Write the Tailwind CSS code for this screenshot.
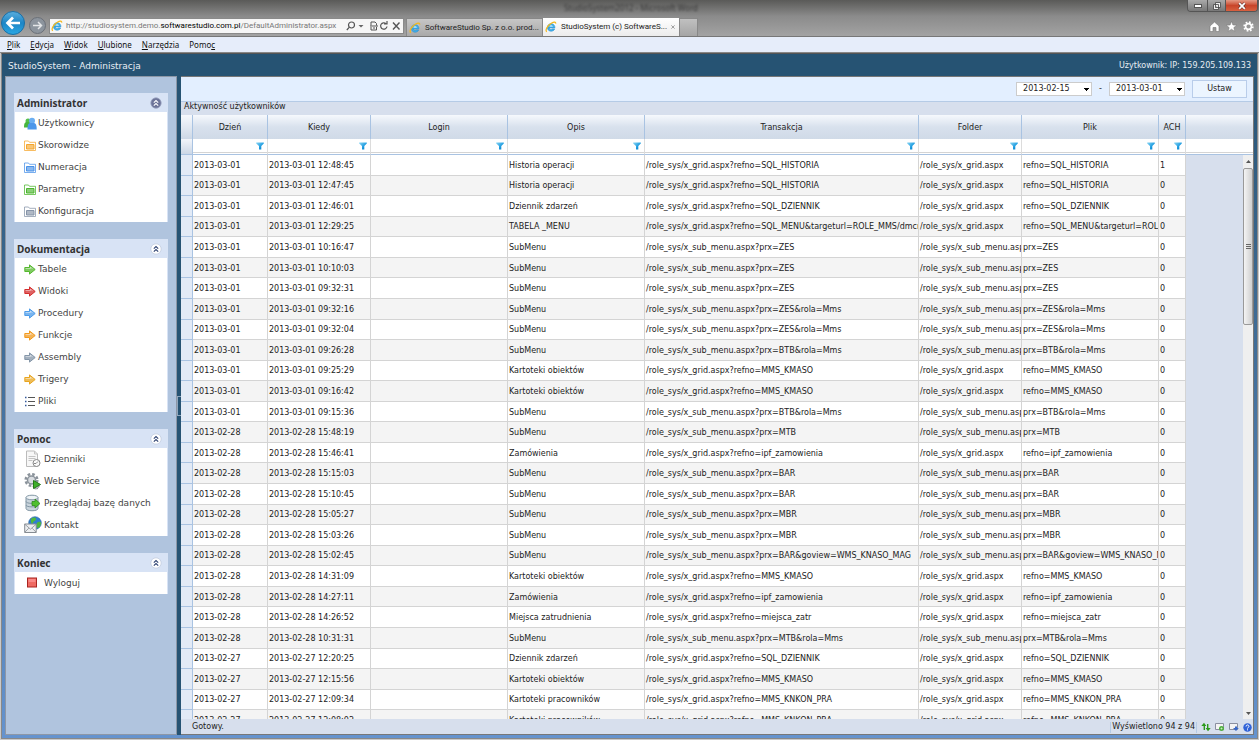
<!DOCTYPE html>
<html lang="pl">
<head>
<meta charset="utf-8">
<title>StudioSystem - Administracja</title>
<script src="https://cdn.jsdelivr.net/npm/@tailwindcss/browser@4"></script>
</head>
<body class="h-screen flex flex-col overflow-hidden bg-[#c9c9c9] font-['DejaVu_Sans',sans-serif] text-[8px] leading-[10px] text-[#222]">
<svg class="absolute size-0" aria-hidden="true">
  <defs>
    <linearGradient id="fun" x1="0" y1="0" x2="1" y2="1"><stop offset="0" stop-color="#8fd8f5"/><stop offset=".6" stop-color="#1b9be0"/><stop offset="1" stop-color="#0b78c0"/></linearGradient>
    <symbol id="ie" viewBox="0 0 16 16"><path d="M3.4 9.2h9.8c.1-3.4-1.900-5.600-5-5.600-2.900 0-5 2.100-5 5s2.100 5 5 5c2.200 0 3.900-1.100 4.700-3H9.700c-1.300 1.400-3.900.7-3.900-1.400" fill="#3fb0ea" stroke="#2b8fd0" stroke-width=".8"/><path d="M6 7.300c.3-1.900 4.100-1.900 4.500 0z" fill="#fff"/><path d="M2.500 14.300C-.6 13 3.500 5.500 9 2.600c3-1.600 5.600-1.500 5.200 1" fill="none" stroke="#f4b81c" stroke-width="1.700"/></symbol>
    <symbol id="folder" viewBox="0 0 12 11"><path d="M.5 1h4l1 1.300h6v8.200H.5z" fill="#fff" stroke="currentColor" stroke-opacity=".75"/><path d="M2.500 4.500h7.500v4.500H2.500z" fill="currentColor" fill-opacity=".65" stroke="currentColor"/></symbol>
    <symbol id="arrow" viewBox="0 0 12 11"><path d="M.8 3.500h4.700V.9l5.700 4.600-5.700 4.600V7.500H.8z" fill="currentColor" fill-opacity=".75" stroke="currentColor" stroke-linejoin="round"/><path d="M1.500 4.500h5V3l2 2" fill="none" stroke="#fff" stroke-opacity=".45"/></symbol>
    <symbol id="funnel" viewBox="0 0 8 8"><path d="M.2.400h7.600v1L5.300 4v3.500H3V4L.2 1.400z" fill="url(#fun)"/></symbol>
    <symbol id="chev" viewBox="0 0 12 12"><circle cx="6" cy="6" r="5.200" fill="#fff" stroke="#c3cde0" stroke-width=".8"/><path d="M3.800 5.600 6 3.500l2.200 2.100M3.800 8.600 6 6.500l2.200 2.100" fill="none" stroke="#2e4272" stroke-width="1.100"/></symbol>
  </defs>
</svg>

<header class="relative h-[37px] shrink-0 flex items-end border-b border-[#777] bg-linear-to-b from-[#5a5a58] via-[#8b8b8b] via-45% to-[#a3a3a3] font-['Noto_Sans',sans-serif]">
  <div class="absolute left-[564px] top-[3px] text-[8px] text-[#3d3d3d] blur-[1px]">StudioSystem2012 - Microsoft Word</div>
  <button aria-label="Wstecz" class="ml-px mb-px shrink-0"><svg class="size-6" viewBox="0 0 24 24"><defs><linearGradient id="bk" x1="0" y1="0" x2="0" y2="1"><stop offset="0" stop-color="#5aaede"/><stop offset=".5" stop-color="#1d86c6"/><stop offset="1" stop-color="#2aa8e4"/></linearGradient></defs><circle cx="12" cy="12" r="11.500" fill="url(#bk)" stroke="#1d6fa4"/><path d="M19 12H7M12 6.500 6.500 12 12 17.500" fill="none" stroke="#fff" stroke-width="2.700"/></svg></button>
  <button aria-label="Dalej" class="ml-1 mb-[2px] shrink-0"><svg class="size-[17px]" viewBox="0 0 17 17"><circle cx="8.500" cy="8.500" r="8" fill="#8c949d" stroke="#6b7078"/><path d="M4 8.500h8M9 5l3.500 3.500L9 12" fill="none" stroke="#e4e6e8" stroke-width="1.500"/></svg></button>
  <div class="ml-[3px] mb-[2px] h-4 w-[355px] shrink-0 flex items-center bg-[#f6f6f6] border border-[#8a8a8a] text-[#777]">
    <svg class="ml-px size-3"><use href="#ie"/></svg>
    <span class="ml-[3px] w-[280px] whitespace-nowrap font-['Roboto',sans-serif]">http://studiosystem.demo.<span class="text-black">softwarestudio.com.pl</span>/DefaultAdministrator.aspx</span>
    <svg class="h-[10px] w-[56px] shrink-0" viewBox="0 0 56 10" fill="none" stroke="#555" stroke-width="1.200"><circle cx="5.500" cy="4" r="3"/><path d="M3.400 6.200.8 9"/><path d="M12.500 4h5l-2.500 2.500z" fill="#666" stroke="none"/><path d="M25 4.500V1h4l1.500 1.500v2M25 6v3h5.500V6M24 5h8M27 7h2" stroke-width="1"/><path d="M40 2.600A3.200 3.200 0 1 0 41 5.500M38 3h3V0"/><path d="m47 1.500 6.500 7M53.500 1.500 47 8.500" stroke-width="1.400"/></svg>
  </div>
  <div class="ml-[2px] flex items-end text-[#222] leading-[12px] font-['Roboto',sans-serif]">
    <a href="#" class="h-[18px] w-[137px] flex items-center gap-1 pl-[2px] border border-b-0 border-[#888] bg-linear-to-b from-[#c6c6c6] to-[#a9a9a9] whitespace-nowrap"><svg class="size-3 shrink-0"><use href="#ie"/></svg>SoftwareStudio Sp. z o.o. prod...</a>
    <a href="#" class="h-[18px] w-[136px] flex items-center gap-1 pl-[2px] bg-linear-to-b from-white to-[#ececec] whitespace-nowrap"><svg class="size-3 shrink-0"><use href="#ie"/></svg><span class="flex-1">StudioSystem (c) SoftwareS...</span><svg class="mr-1 size-[6px]" viewBox="0 0 6 6"><path d="m.5.500 5 5m0-5-5 5" stroke="#888" stroke-width="1.200"/></svg></a>
    <button aria-label="Nowa karta" class="h-[18px] w-[19px] border border-b-0 border-[#888] bg-linear-to-b from-[#c0c0c0] to-[#a5a5a5]"></button>
  </div>
  <div class="ml-auto mr-[5px] flex flex-col items-end self-stretch">
    <div class="-mr-1 flex h-3 rounded-b border border-t-0 border-[#555] overflow-hidden">
      <button aria-label="Minimalizuj" class="w-[19px] flex justify-center items-center bg-linear-to-b from-[#aaa] to-[#777]"><svg class="h-[4px] w-2"><rect x=".5" y=".5" width="7" height="3" fill="#fff" stroke="#555"/></svg></button>
      <button aria-label="Przywróć" class="w-[19px] flex justify-center items-center border-x border-[#555] bg-linear-to-b from-[#aaa] to-[#777]"><svg class="size-2" viewBox="0 0 8 8"><path d="M2.500.500h5v5h-5zM.5 2.500h5v5h-5z" fill="#eee" stroke="#444" stroke-width=".8"/><path d="M2.500 4.500h1v1h-1z" fill="#444"/></svg></button>
      <button aria-label="Zamknij" class="w-[31px] flex justify-center items-center bg-linear-to-b from-[#e39a85] via-[#c8452a] to-[#d8603f]"><svg class="size-2" viewBox="0 0 8 8"><path d="m1.200 1.200 5.600 5.600m0-5.600L1.200 6.800" stroke="#533" stroke-width="2.800"/><path d="m1.200 1.200 5.600 5.600m0-5.600L1.200 6.800" stroke="#fff" stroke-width="1.700"/></svg></button>
    </div>
    <div class="mt-[9px] flex gap-[6px]">
      <button aria-label="Strona główna"><svg class="size-[11px]" viewBox="0 0 11 11"><path d="M5.500 1 1 5v5.500h3V6.500h3v4h3V5z" fill="#fff" stroke="#777" stroke-width=".6"/></svg></button>
      <button aria-label="Ulubione"><svg class="size-[11px]" viewBox="0 0 11 11"><path d="m5.500.400 1.400 3.600 3.900.2-3 2.400 1 3.800-3.300-2.200-3.300 2.200 1-3.800-3-2.400 3.900-.2z" fill="#fff" stroke="#777" stroke-width=".5"/></svg></button>
      <button aria-label="Narzędzia"><svg class="size-[11px]" viewBox="0 0 11 11"><circle cx="5.500" cy="5.500" r="4.300" fill="none" stroke="#fff" stroke-width="1.800" stroke-dasharray="1.700 1.670"/><circle cx="5.500" cy="5.500" r="2.900" fill="none" stroke="#fff" stroke-width="1.600"/></svg></button>
    </div>
  </div>
</header>

<nav class="h-[16px] shrink-0 flex items-center gap-[10px] pl-[7px] bg-[#e6edfa] border-b border-[#888] font-['Noto_Sans',sans-serif] text-[#111]">
  <a href="#"><u>P</u>lik</a><a href="#"><u>E</u>dycja</a><a href="#"><u>W</u>idok</a><a href="#"><u>U</u>lubione</a><a href="#"><u>N</u>arzędzia</a><a href="#">Pomo<u>c</u></a>
</nav>

<div class="flex-1 min-h-0 flex flex-col mx-px mb-px px-[3px] pb-[3px] bg-linear-to-b from-[#265373] to-[#6593ce] border border-t-[#555] border-[#888]">
  <div class="h-[22px] shrink-0 -mx-[3px] px-[6px] pt-[2px] flex items-center justify-between bg-[#265373] text-[#e8eef4]">
    <h1 class="text-[9px] leading-[12px]">StudioSystem - Administracja</h1>
    <span>Użytkownik: IP: 159.205.109.133</span>
  </div>
  <div class="flex-1 min-h-0 flex">
    <aside class="w-[172px] shrink-0 flex flex-col gap-[17px] px-2 pt-4 border border-[#8d97a6] bg-[#b0c4de] text-[9px] leading-[12px] text-[#444]" id="side"></aside>
    <div class="w-1 shrink-0 bg-[#265373] flex items-center"><div class="h-5 w-full border-y border-l border-[#8fa6bd]"></div></div>
    <main class="flex-1 min-w-0 flex flex-col border border-l-0 border-[#777]">
      <form class="h-6 shrink-0 flex items-center justify-end gap-[7px] pr-[6px] bg-[#e3efff]">
        <select aria-label="Data od" class="appearance-none h-[14px] w-[76px] pl-[6px] border border-[#ccc] text-[#222] bg-[linear-gradient(#000,#000),linear-gradient(#000,#000),linear-gradient(#000,#000)] bg-white bg-no-repeat bg-[size:5px_1px,3px_1px,1px_1px] bg-[position:67px_5px,68px_6px,69px_7px]"><option>2013-02-15</option></select>
        <span>-</span>
        <select aria-label="Data do" class="appearance-none h-[14px] w-[76px] pl-[6px] border border-[#ccc] text-[#222] bg-[linear-gradient(#000,#000),linear-gradient(#000,#000),linear-gradient(#000,#000)] bg-white bg-no-repeat bg-[size:5px_1px,3px_1px,1px_1px] bg-[position:67px_5px,68px_6px,69px_7px]"><option>2013-03-01</option></select>
        <button type="button" class="h-[18px] w-[55px] border border-[#b9cdea] bg-[#ecf5ff]">Ustaw</button>
      </form>
      <h2 class="h-[14px] shrink-0 flex items-start pl-[3px] border-t border-[#b5cbe6] bg-[#d7dfed]">Aktywność użytkowników</h2>
      <div class="relative flex-1 min-h-0 overflow-hidden bg-[#d7dfed]">
        <table class="table-fixed w-full h-[616px] border-separate border-spacing-0 text-left">
          <colgroup><col class="w-3"><col class="w-[75px]"><col class="w-[103px]"><col class="w-[137px]"><col class="w-[137px]"><col class="w-[274px]"><col class="w-[103px]"><col class="w-[137px]"><col class="w-[27px]"><col></colgroup>
          <thead id="head"></thead>
          <tbody id="rows"></tbody>
        </table>
        <div class="absolute right-0 top-10 bottom-0 w-[10px] flex flex-col items-center bg-[#efefef]" role="scrollbar" aria-label="Przewijanie" aria-controls="rows" aria-valuenow="0">
          <svg class="mt-[5px] h-[3px] w-[5px]" viewBox="0 0 5 3"><path d="M0 3h5L2.500 0z" fill="#555"/></svg>
          <div class="mt-[5px] h-[157px] w-[10px] rounded-xs border border-[#999] bg-linear-to-r from-[#f4f4f4] to-[#cfcfcf] flex items-center justify-center"><div class="h-[5px] w-[5px] border-y border-[#666] flex items-center"><div class="h-px w-full bg-[#666]"></div></div></div>
          <svg class="mt-auto mb-1 h-[3px] w-[5px]" viewBox="0 0 5 3"><path d="M0 0h5L2.500 3z" fill="#555"/></svg>
        </div>
      </div>
      <footer class="h-[15px] shrink-0 flex items-center bg-[#d7dfed] pl-[11px] pt-px">
        <span class="flex-1">Gotowy.</span>
        <span class="border-x border-[#b5cbe6] h-[11px] px-px">Wyświetlono 94 z 94</span>
        <span class="ml-1 mr-px flex gap-[4px]">
          <button aria-label="Odśwież"><svg class="size-[10px]" viewBox="0 0 10 10"><path d="M2.600 8V4H.3L3 .8 5.400 4H4v4zM7.400 2v4h2.300L7 9.200 4.600 6H6V2z" fill="#2c9a1c"/></svg></button>
          <button aria-label="Odśwież dane"><svg class="size-[10px]" viewBox="0 0 10 10"><path d="M.5 1.500h8v6h-8z" fill="#f4f4f4" stroke="#8a8fa0"/><circle cx="6.500" cy="6.500" r="2.500" fill="#4fae3f"/><path d="M5.500 6.500h2M6.500 5.500v2" stroke="#d8f5d0" stroke-width=".7"/></svg></button>
          <button aria-label="Eksport"><svg class="size-[10px]" viewBox="0 0 10 10"><path d="M.5 1.500h8v6h-8z" fill="#f4f4f4" stroke="#8a8fa0"/><path d="M4 6h2V4.500h2V6h1.800L7 9z" fill="#3868c8"/></svg></button>
          <button aria-label="Pomoc"><svg class="size-[9px]" viewBox="0 0 10 10"><circle cx="5" cy="5" r="4.700" fill="#2f62d8"/><path d="M3.400 3.900C3.400 1.600 6.600 1.700 6.600 3.800 6.600 5 5 5 5 6.200M5 7v1.200" fill="none" stroke="#fff" stroke-width="1.100"/></svg></button>
        </span>
      </footer>
    </main>
  </div>
</div>

<script>
const svg = (ref, color) => `<svg class="h-[11px] w-3 shrink-0" style="color:${color}"><use href="#${ref}"/></svg>`;
const users = '<svg class="size-[13px] shrink-0 -mr-px" viewBox="0 0 13 13"><circle cx="4" cy="4" r="2.500" fill="#55c04a"/><path d="M0 10.500C0 5 1.500 5 4 5s4 0 4 5.500z" fill="#46b53c"/><circle cx="8" cy="3.800" r="3" fill="#6aaef2"/><path d="M3.500 12.500C3.500 6 5 6 8 6s4.700 0 4.700 6.500z" fill="#4d97ea"/></svg>';
const list = '<svg class="h-[11px] w-3 shrink-0" viewBox="0 0 12 11"><path d="M4 1.500h7M4 5.500h7M4 9.500h7" stroke="#555"/><path d="M1 1.500h1.500M1 5.500h1.500M1 9.500h1.500" stroke="#345a9c" stroke-width="1.600"/></svg>';
const log = '<svg class="size-[18px] shrink-0" viewBox="0 0 18 18"><path d="M2.500 1h8l3 3v12.500h-11z" fill="#f7f7f7" stroke="#bbb"/><path d="M10.500 1v3h3M4.500 6.500h7M4.500 8.500h7M4.500 10.500h4" fill="none" stroke="#c4c4c4"/><circle cx="12.500" cy="13" r="3.500" fill="#fafafa" stroke="#888"/><path d="m12 13.500 2-2M12 13.500h-2" fill="none" stroke="#888"/></svg>';
const gear = '<svg class="size-[18px] shrink-0" viewBox="0 0 18 18"><circle cx="7.500" cy="8" r="5.800" fill="none" stroke="#8b939b" stroke-width="2.600" stroke-dasharray="2.600 1.950"/><circle cx="7.500" cy="8" r="4" fill="#d9dde1" stroke="#8b939b" stroke-width="1.500"/><circle cx="12" cy="14" r="3" fill="#b7bdc3" stroke="#777" stroke-dasharray="1.500 1"/><path d="M9.500 8.500v8l7-4z" fill="#3fae2a" stroke="#237a16"/></svg>';
const db = '<svg class="size-[18px] shrink-0" viewBox="0 0 18 18"><path d="M2 3.500v11c0 3 12 3 12 0v-11" fill="#c9d4dc" stroke="#8296a4"/><ellipse cx="8" cy="3.500" rx="6" ry="2.300" fill="#eef3f6" stroke="#8296a4"/><path d="M2 7.500c0 2.500 12 2.500 12 0M2 11c0 2.500 12 2.500 12 0" fill="none" stroke="#8296a4"/><path d="M8 7.500h3V5l5 4.500-5 4.500v-2.500H8z" fill="#4fc02e" stroke="#2d8a1a" stroke-width=".8"/></svg>';
const mail = '<svg class="size-[18px] shrink-0" viewBox="0 0 18 18"><circle cx="11" cy="7" r="6.300" fill="#2f7fd0" stroke="#235f9c" stroke-width=".6"/><path d="M7 3c2-2 5-2 5 0s-3 2-3 4-3 0-2-4zM13 7c2-2 4-1 4 0s-1 5-3 5-2-4-1-5z" fill="#4fb83c"/><path d="M.7 8h11.500v8.500H.7z" fill="#eceef0" stroke="#868c92"/><path d="m.8 8.200 5.700 5 5.700-5M.8 16.200l4-4m7.300 4-4-4" fill="none" stroke="#868c92" stroke-width=".8"/></svg>';
const stop = '<svg class="size-[18px] shrink-0" viewBox="0 0 18 18"><rect x="3.500" y="4" width="9" height="9" fill="#ef6a62" stroke="#a92420"/><path d="M4.500 5h7v3h-7z" fill="#f99" fill-opacity=".7"/></svg>';

const groups = [
  ['Administrator', [[users,'Użytkownicy'],[svg('folder','#f5a62c'),'Skorowidze'],[svg('folder','#4a92e8'),'Numeracja'],[svg('folder','#4cb52e'),'Parametry'],[svg('folder','#8694a8'),'Konfiguracja']]],
  ['Dokumentacja', [[svg('arrow','#55b82e'),'Tabele'],[svg('arrow','#d42e2e'),'Widoki'],[svg('arrow','#4c9cea'),'Procedury'],[svg('arrow','#f29a1e'),'Funkcje'],[svg('arrow','#8496a8'),'Assembly'],[svg('arrow','#e8a520'),'Trigery'],[list,'Pliki']]],
  ['Pomoc', [[log,'Dzienniki'],[gear,'Web Service'],[db,'Przeglądaj bazę danych'],[mail,'Kontakt']]],
  ['Koniec', [[stop,'Wyloguj']]],
];
document.getElementById('side').innerHTML = groups.map(([title, items], i) => `
  <section class="bg-white border-x border-[#d8e3f5]">
    <div class="h-[19px] flex items-center justify-between pl-[2px] pr-[5px] bg-[#d8e3f5]">
      <h2 class="font-['Noto_Sans',sans-serif] font-bold text-[10px] text-[#333]">${title}</h2>
      <button aria-label="Zwiń ${title}">${i ? '<svg class="size-3"><use href="#chev"/></svg>' : '<svg class="size-3" viewBox="0 0 12 12"><circle cx="6" cy="6" r="5.200" fill="#6d7499" stroke="#9aa3c0" stroke-width=".8"/><path d="M3.800 5.600 6 3.500l2.200 2.100M3.800 8.600 6 6.500l2.200 2.100" fill="none" stroke="#fff" stroke-width="1.100"/></svg>'}</button>
    </div>
    <ul>${items.map(([icon, text]) => `<li><a href="#" class="h-[22px] pl-[9px] flex items-center gap-[2px] whitespace-nowrap">${icon}${text}</a></li>`).join('')}</ul>
  </section>`).join('');

const cols = ['Dzień','Kiedy','Login','Opis','Transakcja','Folder','Plik','ACH'];
document.getElementById('head').innerHTML = `
  <tr class="h-6">
    <th class="p-0 border-r border-[#a9c3e2] bg-linear-to-b from-[#f6f9fd] to-[#cdd8e6]"></th>
    ${cols.map(c => `<th scope="col" class="p-0 pt-[2px] text-center font-normal border-r border-[#a9c3e2] bg-linear-to-b from-[#f6f9fd] via-[#d8e1ed] to-[#d0dae7]">${c}</th>`).join('')}
    <th class="p-0 bg-linear-to-b from-[#f6f9fd] via-[#d8e1ed] to-[#d0dae7]"></th>
  </tr>
  <tr class="h-4">
    <td class="p-0 border-r border-b border-[#a9c3e2] bg-linear-to-b from-[#f2f5fa] to-[#ccd7e6]"></td>
    ${cols.map(c => `<td class="p-0 border-r border-r-[#dcdcdc] border-b border-b-[#a9c3e2] bg-white"><div class="h-[13px] flex items-center justify-end pr-[3px] border-b border-[#d4d4d4]"><button aria-label="Filtruj ${c}"><svg class="size-2"><use href="#funnel"/></svg></button></div></td>`).join('')}
    <td class="p-0 border-b border-[#a9c3e2] bg-white"><div class="h-[13px] border-b border-[#d4d4d4]"></div></td>
  </tr>`;

const G = '/role_sys/x_grid.aspx', S = '/role_sys/x_sub_menu.aspx';
const data = [
  ['2013-03-01 12:48:45','Historia operacji',G,'refno=SQL_HISTORIA',1],
  ['2013-03-01 12:47:45','Historia operacji',G,'refno=SQL_HISTORIA'],
  ['2013-03-01 12:46:01','Dziennik zdarzeń',G,'refno=SQL_DZIENNIK'],
  ['2013-03-01 12:29:25','TABELA _MENU',G,'refno=SQL_MENU&amp;targeturl=ROLE_MMS/dmcmenu'],
  ['2013-03-01 10:16:47','SubMenu',S,'prx=ZES'],
  ['2013-03-01 10:10:03','SubMenu',S,'prx=ZES'],
  ['2013-03-01 09:32:31','SubMenu',S,'prx=ZES'],
  ['2013-03-01 09:32:16','SubMenu',S,'prx=ZES&amp;rola=Mms'],
  ['2013-03-01 09:32:04','SubMenu',S,'prx=ZES&amp;rola=Mms'],
  ['2013-03-01 09:26:28','SubMenu',S,'prx=BTB&amp;rola=Mms'],
  ['2013-03-01 09:25:29','Kartoteki obiektów',G,'refno=MMS_KMASO'],
  ['2013-03-01 09:16:42','Kartoteki obiektów',G,'refno=MMS_KMASO'],
  ['2013-03-01 09:15:36','SubMenu',S,'prx=BTB&amp;rola=Mms'],
  ['2013-02-28 15:48:19','SubMenu',S,'prx=MTB'],
  ['2013-02-28 15:46:41','Zamówienia',G,'refno=ipf_zamowienia'],
  ['2013-02-28 15:15:03','SubMenu',S,'prx=BAR'],
  ['2013-02-28 15:10:45','SubMenu',S,'prx=BAR'],
  ['2013-02-28 15:05:27','SubMenu',S,'prx=MBR'],
  ['2013-02-28 15:03:26','SubMenu',S,'prx=MBR'],
  ['2013-02-28 15:02:45','SubMenu',S,'prx=BAR&amp;goview=WMS_KNASO_MAG'],
  ['2013-02-28 14:31:09','Kartoteki obiektów',G,'refno=MMS_KMASO'],
  ['2013-02-28 14:27:11','Zamówienia',G,'refno=ipf_zamowienia'],
  ['2013-02-28 14:26:52','Miejsca zatrudnienia',G,'refno=miejsca_zatr'],
  ['2013-02-28 10:31:31','SubMenu',S,'prx=MTB&amp;rola=Mms'],
  ['2013-02-27 12:20:25','Dziennik zdarzeń',G,'refno=SQL_DZIENNIK'],
  ['2013-02-27 12:15:56','Kartoteki obiektów',G,'refno=MMS_KMASO'],
  ['2013-02-27 12:09:34','Kartoteki pracowników',G,'refno=MMS_KNKON_PRA'],
  ['2013-02-27 12:08:02','Kartoteki pracowników',G,'refno=MMS_KNKON_PRA'],
];
document.getElementById('rows').innerHTML = data.map(([when, name, folder, file, ach = 0]) => `
  <tr class="odd:bg-white even:bg-[#f4f4f4]">
    <td class="p-0 border-r border-b border-[#a9c3e2] bg-[#e2eaf6]"></td>
    ${[when.slice(0, 10), when, '', name, folder + '?' + file, folder, file, ach].map(v => `<td class="p-0 pt-[2px] pl-px border-r border-b border-[#d4d4d4] whitespace-nowrap overflow-hidden">${v}</td>`).join('')}
    <td class="p-0 bg-[#d7dfed]"></td>
  </tr>`).join('');
</script>
</body>
</html>
